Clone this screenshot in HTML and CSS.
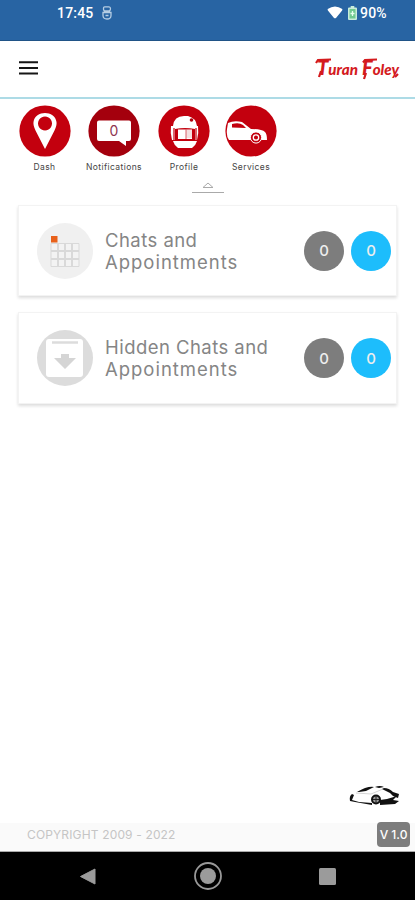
FILE: index.html
```
<!DOCTYPE html>
<html lang="en">
<head>
<meta charset="utf-8">
<title>Turan Foley</title>
<link rel="stylesheet" href="styles.css">
</head>
<body>
<div class="status">
  <span class="time">17:45</span>
  <svg class="status-app" width="10" height="14" viewBox="0 0 10 14"><g fill="none" stroke="#b5cde3" stroke-width="1.300"><path d="M3 .8h4q1.500 0 1.500 2T7 5H3Q1.500 5 1.500 2.800T3 .8zM1 6.500h8v3q0 3.500-4 3.500t-4-3.500z"/><path d="M3.500 9.500h3M2.500 5v2M7.500 5v2"/></g></svg>
  <svg class="wifi" width="16" height="13" viewBox="0 0 16 13"><path d="M.7 3Q8-2 15.300 3q.2 1-.4 1.700L9.200 11.700q-1.200 1.300-2.400 0L1.100 4.700Q.5 4 .7 3z" fill="#fff"/></svg>
  <svg class="battery" width="9" height="14" viewBox="0 0 9 14"><path d="M2.700 0h3.600v1.500H8q1 0 1 1V13q0 1-1 1H1q-1 0-1-1V2.500q0-1 1-1h1.700z" fill="#c9eddb"/><path d="M1.500 3h6v9.500h-6z" fill="#70c990"/><path d="M4.500 5v5M2.500 7.500h4" stroke="#e9fff0" stroke-width="1.300"/></svg>
  <span class="percent">90%</span>
</div>
<header class="header">
  <svg class="menu" width="19" height="14" viewBox="0 0 19 14"><path d="M0 1.300h19M0 7h19M0 12.500h19" stroke="#161616" stroke-width="2"/></svg>
  <svg class="logo" width="90" height="40" viewBox="0 0 90 40">
    <g class="logo-text">
      <text x="4" y="26" textLength="41" lengthAdjust="spacingAndGlyphs"><tspan font-size="20">T</tspan><tspan font-size="15">uran</tspan></text>
      <text x="49" y="26" textLength="37" lengthAdjust="spacingAndGlyphs"><tspan font-size="20">F</tspan><tspan font-size="15">oley</tspan></text>
    </g>
    <path d="M3 14L5 11l13-.5M50 13.500l2-2.500 12-.5M8 22L6 28M53 24l-2 6M82 28l3-3" fill="none" stroke="#d41b1e" stroke-width="2.200"/>
  </svg>
</header>
<main class="main">
  <nav class="nav">
    <div class="item"><svg class="disc" viewBox="0 0 52 52"><circle cx="26" cy="26" r="25.600" fill="#c3000e"/><path fill-rule="evenodd" d="M26 44L16.500 25.500Q14 20 14.500 17C16 5 36 5 37.500 17q.5 3-2 8.500zM26 11.500a7 7 0 1 0 .01 0z" fill="#fff"/></svg><span>Dash</span></div>
    <div class="item"><svg class="disc" viewBox="0 0 52 52"><circle cx="26" cy="26" r="25.600" fill="#a4000d"/><path d="M11 15.500h30q2 0 2 2V34q0 2-2 2h-3v5l-7-5H11q-2 0-2-2V17.500q0-2 2-2z" fill="#fff"/><text x="26" y="31" class="bubble-count">0</text></svg><span class="long">Notifications</span></div>
    <div class="item"><svg class="disc" viewBox="0 0 52 52"><circle cx="26" cy="26" r="25.600" fill="#c3000e"/><path d="M15 21q1-10 11-10h4q8 2 9 10z" fill="#fff"/><path d="M13 21q-1 7 1 14h25q2-7 1-14z" fill="#fff"/><path d="M15 36h24q-1 4-5 7H20q-4-3-5-7z" fill="#fff"/><path d="M16 23v12M38 23v12" stroke="#c3000e" stroke-width="1.200"/><path d="M17 24q10-2 20 0v11q-10 2-20 0z" fill="#c3000e"/><path d="M20 24.500h14v9.500H20z" fill="#fff"/><path d="M28 25h6v8h-6z" fill="#f4dfe0"/><path d="M28 24v10" stroke="#d96068"/><circle cx="33.500" cy="15" r="1.800" fill="#b0000d"/></svg><span>Profile</span></div>
    <div class="item"><svg class="disc" viewBox="0 0 52 52"><circle cx="26" cy="26" r="25.600" fill="#c3000e"/><path d="M3 18q6-3 14-1l9 7q11 0 14 3 2 2 2 8H4q-3-4-2-11z" fill="#fff"/><path d="M7 22.500V19q7-2 11 1l3 3z" fill="#c3000e"/><circle cx="31" cy="32.500" r="5.600" fill="#c3000e" stroke="#fff"/><circle cx="31" cy="32.500" r="2.700" fill="none" stroke="#fff" stroke-width="1.300"/></svg><span>Services</span></div>
  </nav>
  <svg class="collapse" width="32" height="11" viewBox="0 0 32 11"><path d="M11 5.500L16 1l5 4.500z" fill="#fff" stroke="#aaa"/><path d="M0 10.500h32" stroke="#aaa"/></svg>
  <section class="card">
    <svg class="card-icon" viewBox="0 0 56 56"><circle cx="28" cy="28" r="28" fill="#f0f0f0"/><g fill="#f3f3f3" stroke="#d9d9d9"><path d="M14 20.500h28v23H14z"/><path d="M14 28h28M14 36h28M21 20.500v23M28 20.500v23M35 20.500v23" stroke-width="2"/></g><path d="M14 13h6.500v6.500H14z" fill="#e8611b"/></svg>
    <h2><span>Chats and</span><br><span class="appointments">Appointments</span></h2>
    <b class="count">0</b><b class="count blue">0</b>
  </section>
  <section class="card second">
    <svg class="card-icon" viewBox="0 0 56 56"><circle cx="28" cy="28" r="28" fill="#dcdcdc"/><rect x="9" y="9" width="37" height="38" rx="3" fill="#fff"/><path d="M15 12.500h26" stroke="#dcdcdc" stroke-width="2.500"/><path d="M24 24h8v4h7L28 39 17 28h7z" fill="#d5d5d5"/></svg>
    <h2>Hidden Chats and<br><span class="appointments">Appointments</span></h2>
    <b class="count">0</b><b class="count blue">0</b>
  </section>
  <svg class="car" width="52" height="22" viewBox="0 0 52 22"><path d="M1 16q-1-5 2-7l2 1-2 5 7 2 13 1v2L6 17zM8 7Q18 1 25 2l-8 4-7 1zM26 2q5-2 9 0l-5 1zM35 3q5 0 9 4l6 2-1 4-5-2-3-3-8-4zM31 15l7-1 10-3-4 4 6 1-4 3-15 1z" fill="#111"/><path d="M7 8l15 1L34 4" fill="none" stroke="#aaa" stroke-width=".5"/><circle cx="27" cy="14.500" r="4" fill="#999" stroke="#111" stroke-width="2"/><path d="M27 11v7M24 14.500h6" stroke="#222"/></svg>
</main>
<footer class="footer"><span class="copy">COPYRIGHT 2009 - 2022</span><span class="version">V 1.0</span></footer>
<div class="system">
  <svg width="16" height="17" viewBox="0 0 16 17"><path d="M.5 8.500L15 1v15z" fill="#9b9b9b" stroke="#9b9b9b" stroke-linejoin="round"/></svg>
  <svg width="28" height="28" viewBox="0 0 28 28"><circle cx="14" cy="14" r="13" fill="none" stroke="#999" stroke-width="1.800"/><circle cx="14" cy="14" r="8" fill="#9b9b9b"/></svg>
  <svg width="17" height="17" viewBox="0 0 17 17"><rect width="17" height="17" rx="1.500" fill="#9b9b9b"/></svg>
</div>
</body>
</html>
```
FILE: styles.css
```
* { box-sizing: border-box; }
body { margin: 0; width: 415px; height: 900px; display: flex; flex-direction: column; background: #fff; font-family: Inter, "Liberation Sans", sans-serif; overflow: hidden; }
svg { display: block; flex: none; }
.status { height: 41px; flex: none; background: #2864a3; border-bottom: 1px solid #205487; display: flex; align-items: flex-start; padding: 6px 27px 0 57px; color: #fff; font: 500 14px/15px Roboto, sans-serif; }
.time { width: 37px; letter-spacing: .2px; }
.status-app { margin-left: 8px; }
.wifi { margin-left: auto; }
.battery { margin: 0 3px 0 5px; }
.percent { width: 28px; white-space: nowrap; letter-spacing: .2px; }
.header { height: 58px; flex: none; border-bottom: 2px solid #addbe6; display: flex; align-items: center; justify-content: space-between; padding: 0 12px 0 19px; }
.menu { margin-top: -2px; }
.logo-text { font-family: Lato, sans-serif; font-style: italic; font-weight: 900; fill: #d41b1e; }
.main { flex: 1; display: flex; flex-direction: column; }
.nav { display: grid; grid-template-columns: 69px 70px 70px 64px; padding: 6px 0 0 10px; height: 83px; flex: none; }
.item { display: flex; flex-direction: column; align-items: center; font-size: 8.5px; line-height: 10px; letter-spacing: .4px; color: #444; white-space: nowrap; }
.disc { width: 52px; height: 52px; margin-bottom: 5px; }
.bubble-count { font-size: 14px; letter-spacing: 0; text-anchor: middle; fill: #8e3551; }
.collapse { margin-left: 192px; }
.card { width: 379px; height: 91px; margin: 12px 0 0 18px; padding: 0 6px 0 18px; display: flex; align-items: center; background: #fff; border: 1px solid #f3f3f3; box-shadow: 0 2px 3px #ddd; flex: none; }
.card.second { margin-top: 16px; height: 92px; }
.card-icon { width: 56px; height: 56px; margin-right: 12px; }
h2 { margin: 0; width: 199px; flex: none; font-size: 18.5px; line-height: 22px; font-weight: 400; color: #858585; letter-spacing: .45px; white-space: nowrap; }
.appointments { letter-spacing: .98px; }
.count { width: 40px; height: 40px; border-radius: 50%; background: #7d7d7d; color: #eee; display: flex; align-items: center; justify-content: center; font-size: 15px; font-weight: 500; flex: none; }
.blue { background: #1dbdfc; margin-left: 7px; }
.car { margin: auto 14px 16px auto; }
.footer { height: 29px; flex: none; background: #fafafa; border-bottom: 1px solid #aaa; padding: 0 5px 0 27px; display: flex; align-items: center; justify-content: space-between; }
.copy { font-size: 12px; letter-spacing: .15px; color: #c5c5c5; margin-top: -6px; }
.version { width: 33px; height: 25px; border-radius: 4px; background: #7d7d7d; color: #fff; font-size: 12px; line-height: 25px; font-weight: 500; text-align: center; margin-top: -6px; }
.system { height: 48px; flex: none; background: #000; display: flex; align-items: center; justify-content: space-between; padding: 0 79px 0 80px; }
```
